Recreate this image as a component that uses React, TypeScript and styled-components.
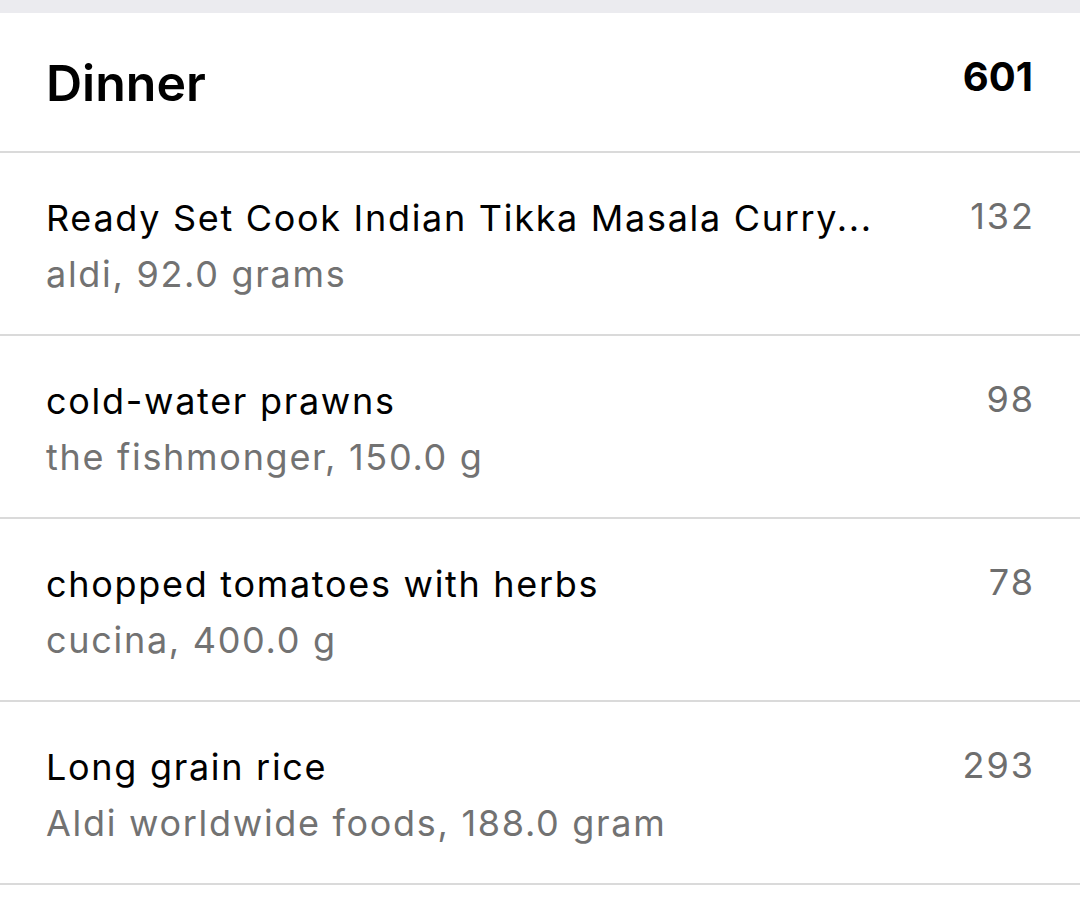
import React from "react";
import styled, { createGlobalStyle } from "styled-components";

const GlobalStyle = createGlobalStyle`
  html, body {
    margin: 0;
    padding: 0;
    background: #ffffff;
  }
  body {
    font-family: Inter, "Noto Sans", "Liberation Sans", sans-serif;
    -webkit-font-smoothing: antialiased;
  }
`;

const Page = styled.div`
  min-height: 100vh;
  display: flex;
  flex-direction: column;
  background: #ffffff;
`;

const TopBand = styled.div`
  height: 13px;
  background: #ebebef;
`;

const Section = styled.section`
  display: flex;
  flex-direction: column;
`;

const Header = styled.div`
  height: 138px;
  display: flex;
  justify-content: space-between;
  align-items: center;
  padding: 0 47px 0 46px;
  border-bottom: 2px solid #dadada;
`;

const Title = styled.h2`
  margin: 2px 0 0;
  font-size: 50px;
  font-weight: 600;
  color: #000;
  letter-spacing: 0;
`;

const Total = styled.span`
  margin-bottom: 12px;
  font-size: 40px;
  font-weight: 700;
  color: #000;
`;

const Row = styled.div`
  height: 181px;
  display: flex;
  align-items: center;
  justify-content: space-between;
  gap: 40px;
  padding: 0 45px 0 46px;
  border-bottom: 2px solid #dadada;
`;

const Info = styled.div`
  display: flex;
  flex-direction: column;
  gap: 12px;
  min-width: 0;
  margin-top: 4px;
`;

const Name = styled.span`
  font-size: 36px;
  line-height: 44px;
  letter-spacing: 1.7px;
  color: #000;
  white-space: nowrap;
  overflow: hidden;
  text-overflow: ellipsis;
`;

const Detail = styled.span`
  font-size: 36px;
  line-height: 44px;
  letter-spacing: 1.7px;
  color: #727272;
  white-space: nowrap;
`;

const Calories = styled.span`
  align-self: flex-start;
  margin-top: 41px;
  font-size: 36px;
  line-height: 44px;
  letter-spacing: 2px;
  color: #6e6e6e;
`;

type Food = { name: string; detail: string; kcal: number };

const foods: Food[] = [
  { name: "Ready Set Cook Indian Tikka Masala Curry...", detail: "aldi, 92.0 grams", kcal: 132 },
  { name: "cold-water prawns", detail: "the fishmonger, 150.0 g", kcal: 98 },
  { name: "chopped tomatoes with herbs", detail: "cucina, 400.0 g", kcal: 78 },
  { name: "Long grain rice", detail: "Aldi worldwide foods, 188.0 gram", kcal: 293 },
];

const App: React.FC = () => {
  return (
    <>
      <GlobalStyle />
      <Page>
        <TopBand />
        <Section>
          <Header>
            <Title>Dinner</Title>
            <Total>601</Total>
          </Header>
          {foods.map((f) => (
            <Row key={f.name}>
              <Info>
                <Name>{f.name}</Name>
                <Detail>{f.detail}</Detail>
              </Info>
              <Calories>{f.kcal}</Calories>
            </Row>
          ))}
        </Section>
      </Page>
    </>
  );
};

export default App;
